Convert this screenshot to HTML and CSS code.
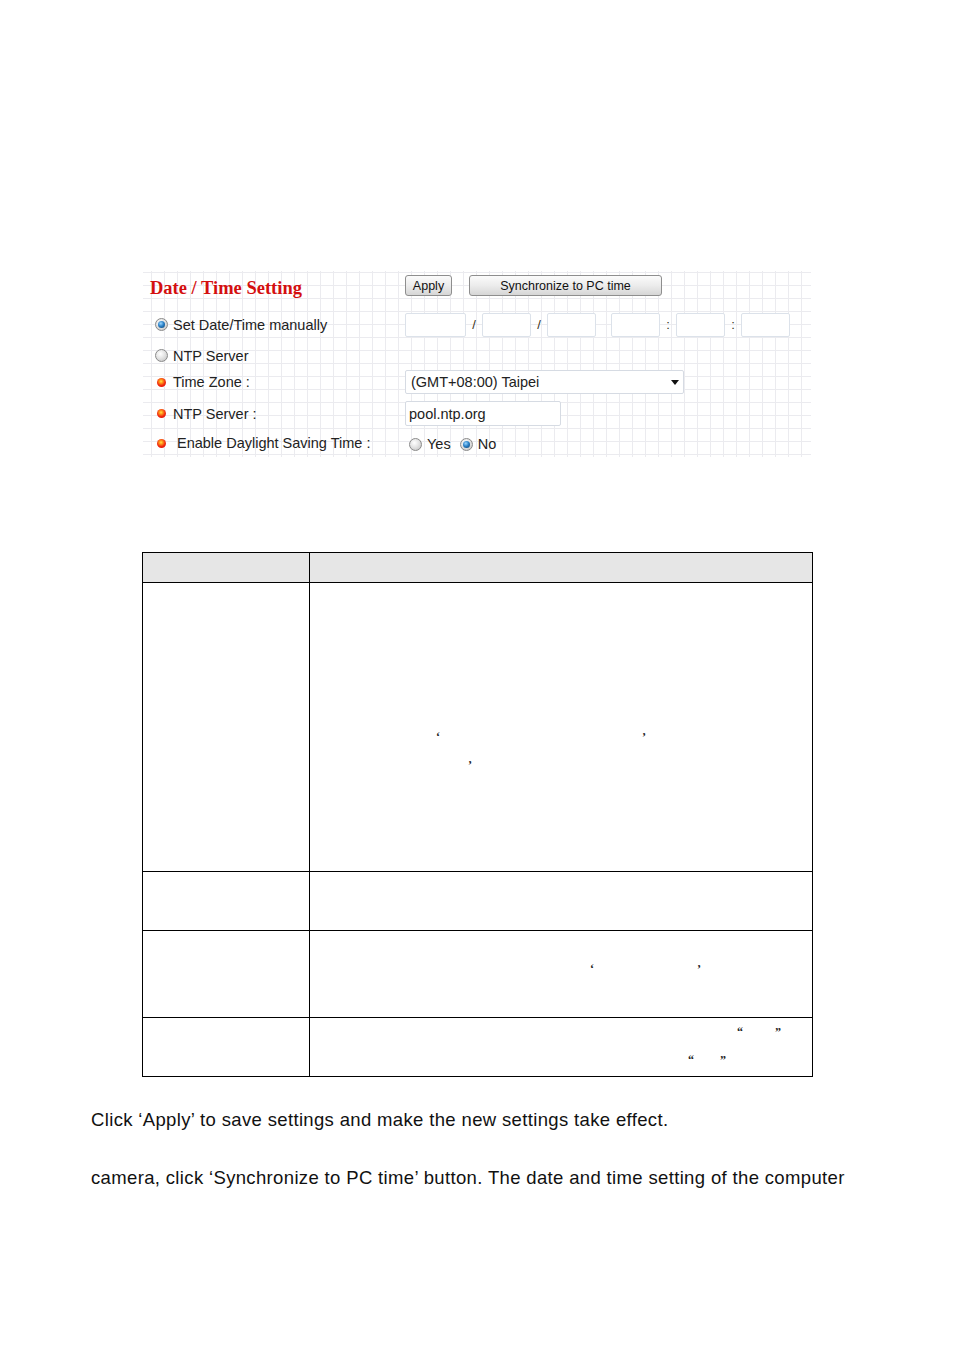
FILE: index.html
```html
<!DOCTYPE html>
<html>
<head>
<meta charset="utf-8">
<link rel="stylesheet" href="styles.css">
</head>
<body>
<div class="page">
  <section class="panel">
    <div class="cell lab title-cell"><h1 class="title">Date / Time Setting</h1></div>
    <div class="cell ctl btns">
      <button class="btn btn-apply">Apply</button>
      <button class="btn btn-sync">Synchronize to PC time</button>
    </div>

    <div class="cell lab r1"><span class="radio on"></span><span class="txt">Set Date/Time manually</span></div>
    <div class="cell ctl r1 dt">
      <span class="box w61"></span><span class="sep">/</span>
      <span class="box w49"></span><span class="sep">/</span>
      <span class="box w49"></span><span class="gap"></span>
      <span class="box w49"></span><span class="sep">:</span>
      <span class="box w49"></span><span class="sep">:</span>
      <span class="box w49"></span>
    </div>

    <div class="cell lab r2"><span class="radio"></span><span class="txt">NTP Server</span></div>
    <div class="cell ctl r2"></div>

    <div class="cell lab r3"><span class="dot"></span><span class="txt">Time Zone :</span></div>
    <div class="cell ctl r3">
      <span class="select"><span>(GMT+08:00) Taipei</span><span class="caret"></span></span>
    </div>

    <div class="cell lab r4"><span class="dot"></span><span class="txt">NTP Server :</span></div>
    <div class="cell ctl r4"><span class="textbox">pool.ntp.org</span></div>

    <div class="cell lab r5"><span class="dot"></span><span class="txt txt-wide">Enable Daylight Saving Time :</span></div>
    <div class="cell ctl r5 yn">
      <span class="radio"></span><span class="txt">Yes</span>
      <span class="radio on no"></span><span class="txt">No</span>
    </div>
  </section>

  <table class="desc">
    <tr class="head"><td class="c1"></td><td class="c2"></td></tr>
    <tr class="row-a">
      <td class="c1"></td>
      <td class="c2">
        <div class="lines a">
          <div class="ln"><span class="q" style="margin-left:126px">‘</span><span class="q" style="margin-left:202px">’</span></div>
          <div class="ln"><span class="q" style="margin-left:158px">’</span></div>
        </div>
      </td>
    </tr>
    <tr class="row-b"><td class="c1"></td><td class="c2"></td></tr>
    <tr class="row-c">
      <td class="c1"></td>
      <td class="c2">
        <div class="lines c">
          <div class="ln"><span class="q" style="margin-left:280px">‘</span><span class="q" style="margin-left:103px">’</span></div>
        </div>
      </td>
    </tr>
    <tr class="row-d">
      <td class="c1"></td>
      <td class="c2">
        <div class="lines d">
          <div class="ln"><span class="q" style="margin-left:427px">“</span><span class="q" style="margin-left:32px">”</span></div>
          <div class="ln"><span class="q" style="margin-left:378px">“</span><span class="q" style="margin-left:26px">”</span></div>
        </div>
      </td>
    </tr>
  </table>

  <p class="note n1">Click ‘Apply’ to save settings and make the new settings take effect.</p>
  <p class="note n2">camera, click ‘Synchronize to PC time’ button. The date and time setting of the computer</p>
</div>
</body>
</html>
```

FILE: styles.css
```css
html, body {
  margin: 0;
  padding: 0;
  background: #ffffff;
}
body {
  font-family: "Liberation Sans", Arial, sans-serif;
  color: #222;
}
.page {
  padding-top: 271px;
}

/* ---------- settings panel ---------- */
.panel {
  margin-left: 143px;
  width: 668px;
  height: 186px;
  display: grid;
  grid-template-columns: 262px 1fr;
  grid-template-rows: 32px 42px 21px 32px 30px 29px;
  background-color: #fff;
  background-image:
    repeating-linear-gradient(to right, transparent 0, transparent 8px, #ebebef 8px, #ebebef 9px, transparent 9px, transparent 13px),
    repeating-linear-gradient(to bottom, transparent 0, transparent 1px, #ebebef 1px, #ebebef 2px, transparent 2px, transparent 13px);
}
.cell {
  display: flex;
  align-items: center;
  font-size: 14.5px;
  color: #222;
}
.lab {
  padding-left: 12px;
}
.title-cell {
  padding-left: 7px;
}
.title {
  margin: 0;
  font-family: "Liberation Serif", "Times New Roman", serif;
  font-weight: bold;
  font-size: 18.5px;
  color: #d40f0f;
  padding-top: 2px;
}
.btns {
  gap: 17px;
  padding-bottom: 3px;
}
.btn {
  height: 21px;
  padding: 0;
  border: 1px solid #8e8e8e;
  border-radius: 3px;
  background: linear-gradient(to bottom, #fbfbfb 0%, #ececec 50%, #d6d6d6 100%);
  font-family: "Liberation Sans", Arial, sans-serif;
  font-size: 12.5px;
  color: #111;
  box-sizing: border-box;
}
.btn-apply { width: 47px; }
.btn-sync { width: 193px; }

.radio {
  width: 13px;
  height: 13px;
  border-radius: 50%;
  box-sizing: border-box;
  border: 1px solid #8a8a8a;
  background: radial-gradient(circle at 40% 35%, #ffffff 0%, #e4e4e4 45%, #bdbdbd 100%);
  flex: none;
  position: relative;
}
.radio.on::after {
  content: "";
  position: absolute;
  left: 2px;
  top: 2px;
  width: 7px;
  height: 7px;
  border-radius: 50%;
  background: radial-gradient(circle at 40% 35%, #9ad6ff 0%, #2c82c8 45%, #0a3a68 100%);
}
.txt {
  margin-left: 5px;
  white-space: nowrap;
}
.lab .dot + .txt { margin-left: 7px; }
.lab .dot + .txt-wide { margin-left: 11px; }
.dot {
  width: 9px;
  height: 9px;
  border-radius: 50%;
  margin-left: 2px;
  background: radial-gradient(circle at 45% 38%, #ffe24a 0%, #ff9a1a 22%, #f02a10 55%, #d40000 100%);
  flex: none;
}

.r1 { padding-top: 1px; }
.box {
  display: inline-block;
  height: 24px;
  box-sizing: border-box;
  border: 1px solid #dce2ea;
  border-radius: 2px;
  background: #fff;
  flex: none;
}
.w61 { width: 61px; }
.w49 { width: 49px; }
.sep {
  width: 16px;
  text-align: center;
  font-size: 13px;
  color: #3a3020;
  flex: none;
}
.gap { width: 15px; flex: none; }

.r2 .txt { padding-top: 1px; }

.select {
  width: 279px;
  height: 24px;
  box-sizing: border-box;
  border: 1px solid #d6dbe3;
  border-radius: 2px;
  background: #fff;
  display: flex;
  align-items: center;
  justify-content: space-between;
  padding: 0 4px 0 5px;
  font-size: 14.5px;
  color: #222;
}
.caret {
  width: 0;
  height: 0;
  border-left: 4.5px solid transparent;
  border-right: 4.5px solid transparent;
  border-top: 5px solid #111;
}
.textbox {
  width: 156px;
  height: 25px;
  box-sizing: border-box;
  border: 1px solid #d6dbe3;
  border-radius: 2px;
  background: #fff;
  display: flex;
  align-items: center;
  padding-left: 3px;
  font-size: 14.5px;
  color: #222;
}
.r4 { padding-top: 1px; }
.yn { padding-left: 4px; padding-top: 3px; }
.yn .radio.no { margin-left: 9px; }
.r5.lab { padding-top: 1px; }

/* ---------- description table ---------- */
.desc {
  margin-top: 95px;
  margin-left: 142px;
  width: 671px;
  border-collapse: collapse;
  table-layout: fixed;
}
.desc td {
  border: 1px solid #000;
  padding: 0;
  vertical-align: top;
}
.desc .c1 { width: 166px; }
.desc .head td { background: #e6e6e6; height: 29px; }
.row-a td { height: 288px; }
.row-b td { height: 58px; }
.row-c td { height: 86px; }
.row-d td { height: 58px; }
.lines {
  font-family: "Liberation Serif", "Times New Roman", serif;
  font-size: 12px;
  font-weight: bold;
  line-height: 28px;
  color: #222;
}
.lines.a { padding-top: 140px; }
.lines.c { padding-top: 24px; }
.lines.d { padding-top: 0px; }
.ln { height: 28px; white-space: nowrap; }
.q { display: inline-block; }

/* ---------- notes ---------- */
.note {
  margin: 0;
  margin-left: 91px;
  font-size: 18.5px;
  letter-spacing: 0.35px;
  color: #111;
  white-space: nowrap;
}
.n1 { margin-top: 31px; line-height: 24px; }
.n2 { margin-top: 34px; line-height: 24px; }
```
